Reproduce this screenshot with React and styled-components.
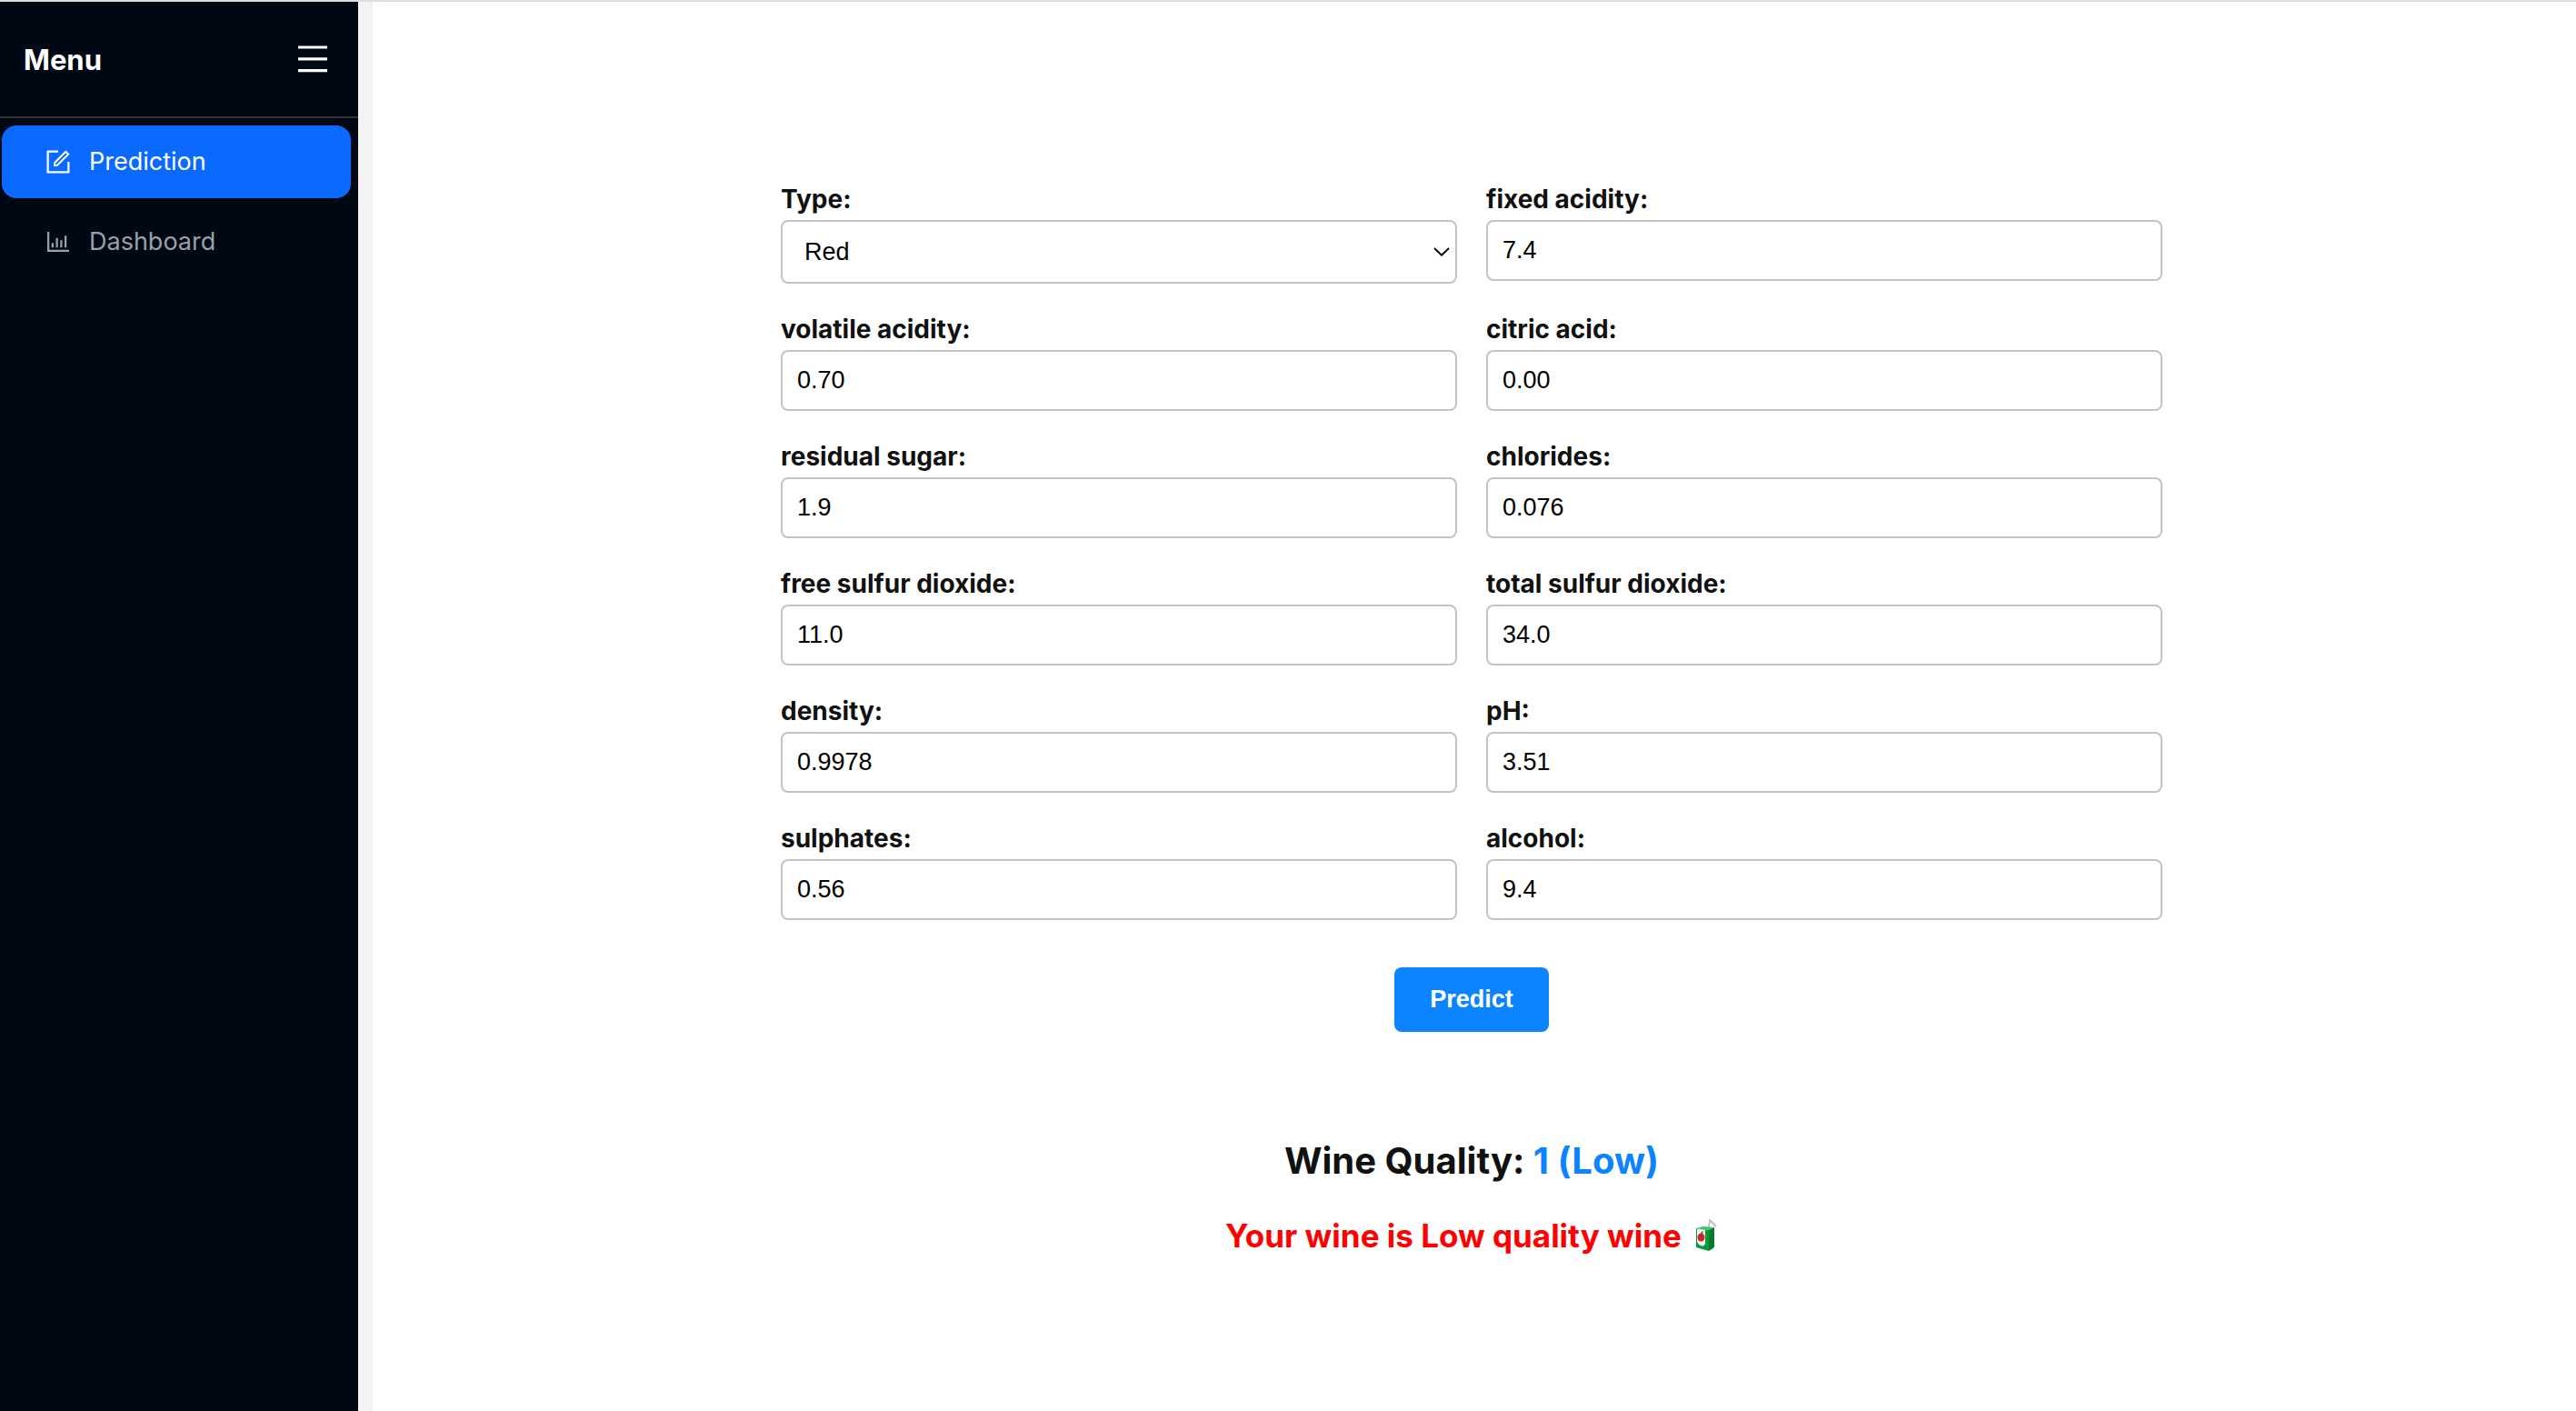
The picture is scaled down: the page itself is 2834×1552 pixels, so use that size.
import React from "react";
import styled, { createGlobalStyle } from "styled-components";
import { AiOutlineForm, AiOutlineBarChart } from "react-icons/ai";

const ui = `Inter, "Liberation Sans", sans-serif`;
const field = `"Liberation Sans", Arial, sans-serif`;

const Global = createGlobalStyle`
  *, *::before, *::after { box-sizing: border-box; }
  body { margin: 0; background: #fff; color: #111; font-family: ${ui}; }
`;

const Page = styled.div`
  display: flex;
  min-height: 100vh;
  border-top: 2px solid #dedede;
`;

const Sidebar = styled.aside`
  flex: none;
  width: 394px;
  background: #000814;
`;

const SidebarHead = styled.header`
  display: flex;
  align-items: center;
  justify-content: space-between;
  height: 128px;
  padding: 0 34px 0 26px;
  border-bottom: 2px solid #333;
`;

const SidebarTitle = styled.h2`
  margin: 0;
  padding-top: 2px;
  color: #fff;
  font-size: 31px;
  line-height: 40px;
`;

const IconButton = styled.button`
  display: flex;
  padding: 0;
  border: 0;
  background: none;
  color: #fff;
  cursor: pointer;
`;

const Nav = styled.nav`
  display: flex;
  flex-direction: column;
  gap: 8px;
  padding: 8px 8px 8px 2px;
`;

const NavLink = styled.a`
  display: flex;
  align-items: center;
  gap: 18px;
  height: 80px;
  padding: 0 46px;
  border-radius: 16px;
  background: ${(p) => (p.$active ? "#0a69ff" : "transparent")};
  color: ${(p) => (p.$active ? "#fff" : "#99a1a8")};
  font-size: 27px;
  line-height: 36px;
  text-decoration: none;
  svg { width: 32px; height: 32px; }
`;

const Main = styled.main`
  flex: 1;
  padding: 199px 6px 0 0;
  border-left: 16px solid #f3f3f3;
`;

const Form = styled.form`
  display: grid;
  grid-template-columns: 1fr 1fr;
  gap: 32px;
  max-width: 1520px;
  margin: 0 auto;
`;

const Field = styled.div`
  display: flex;
  flex-direction: column;
  gap: 5px;
`;

const Label = styled.label`
  font-size: 28px;
  font-weight: 700;
  line-height: 36px;
`;

const Input = styled.input`
  width: 100%;
  height: 67px;
  padding: 0 16px;
  border: 2px solid #c4c4c4;
  border-radius: 8px;
  background: #fff;
  color: #000;
  font: 27px ${field};
`;

const SelectBox = styled.div`
  display: grid;
  align-items: center;
  > * { grid-area: 1 / 1; }
  svg { justify-self: end; margin-right: 8px; pointer-events: none; }
`;

const Select = styled.select`
  appearance: none;
  width: 100%;
  height: 70px;
  padding: 0 24px;
  border: 2px solid #c4c4c4;
  border-radius: 8px;
  background: #fff;
  color: #000;
  font: 27px ${field};
`;

const Actions = styled.div`
  grid-column: 1 / -1;
  display: flex;
  justify-content: center;
  padding-top: 20px;
`;

const Submit = styled.button`
  height: 71px;
  padding: 0 39px;
  border: 0;
  border-radius: 8px;
  background: #0d84ff;
  color: #fff;
  font: bold 27px ${field};
  cursor: pointer;
`;

const Result = styled.section`
  display: flex;
  flex-direction: column;
  align-items: center;
  gap: 34px;
  padding-top: 116px;
`;

const Quality = styled.h2`
  margin: 0;
  font-size: 40px;
  line-height: 52px;
`;

const Score = styled.span`
  color: #0d84ff;
`;

const Verdict = styled.h3`
  display: flex;
  align-items: center;
  gap: 14px;
  margin: 0;
  color: #f00;
  font-size: 35px;
  line-height: 44px;
`;

const fields = [
  ["fixed acidity", "7.4"],
  ["volatile acidity", "0.70"],
  ["citric acid", "0.00"],
  ["residual sugar", "1.9"],
  ["chlorides", "0.076"],
  ["free sulfur dioxide", "11.0"],
  ["total sulfur dioxide", "34.0"],
  ["density", "0.9978"],
  ["pH", "3.51"],
  ["sulphates", "0.56"],
  ["alcohol", "9.4"],
];

const MenuIcon = () => (
  <svg width="32" height="30" viewBox="0 0 32 30" fill="currentColor" aria-hidden="true">
    <path d="M0 .4h32v3.2H0zM0 13.2h32v3.2H0zM0 26h32v3.2H0z" />
  </svg>
);

const Chevron = () => (
  <svg width="18" height="10" viewBox="0 0 18 10" fill="none" stroke="#000" strokeWidth="2" aria-hidden="true">
    <path d="M1 1l8 7.6L17 1" />
  </svg>
);

const JuiceBox = () => (
  <svg width="26" height="36" viewBox="0 0 26 36" role="img" aria-label="juice box">
    <path d="M16 9l1-8 7 7" fill="none" stroke="#cdbcbc" strokeWidth="2" strokeLinejoin="round" />
    <path d="M2 10l8-2 12 1-6 3z" fill="#3fc46c" />
    <path d="M2 10l14 2v23L2 31z" fill="#0a9a3c" />
    <path d="M16 12l6-3v22l-6 4z" fill="#047a2b" />
    <path d="M3 10.500l9 1.300v15c-1 4-6 4-9-2z" fill="#f3f5f0" />
    <ellipse cx="7.500" cy="20" rx="4" ry="4.500" fill="#d3222c" />
    <path d="M7.500 16l2-2.500" stroke="#2c7a2c" strokeWidth="1.500" />
  </svg>
);

export default function App() {
  return (
    <>
      <Global />
      <Page>
        <Sidebar>
          <SidebarHead>
            <SidebarTitle>Menu</SidebarTitle>
            <IconButton type="button" aria-label="Toggle menu">
              <MenuIcon />
            </IconButton>
          </SidebarHead>
          <Nav>
            <NavLink href="#prediction" $active>
              <AiOutlineForm />
              Prediction
            </NavLink>
            <NavLink href="#dashboard">
              <AiOutlineBarChart />
              Dashboard
            </NavLink>
          </Nav>
        </Sidebar>
        <Main>
          <Form onSubmit={(e) => e.preventDefault()}>
            <Field>
              <Label htmlFor="type">Type:</Label>
              <SelectBox>
                <Select id="type" defaultValue="Red">
                  <option>Red</option>
                  <option>White</option>
                </Select>
                <Chevron />
              </SelectBox>
            </Field>
            {fields.map(([name, value]) => (
              <Field key={name}>
                <Label htmlFor={name.replaceAll(" ", "-")}>{name}:</Label>
                <Input id={name.replaceAll(" ", "-")} defaultValue={value} />
              </Field>
            ))}
            <Actions>
              <Submit type="submit">Predict</Submit>
            </Actions>
          </Form>
          <Result>
            <Quality>
              Wine Quality: <Score>1 (Low)</Score>
            </Quality>
            <Verdict>
              Your wine is Low quality wine
              <JuiceBox />
            </Verdict>
          </Result>
        </Main>
      </Page>
    </>
  );
}
